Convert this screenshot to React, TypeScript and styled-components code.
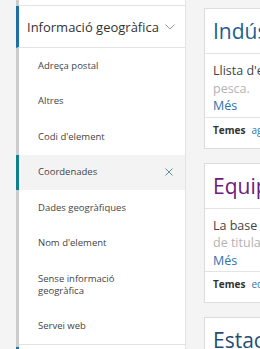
import React from "react";
import styled, { createGlobalStyle } from "styled-components";

const Global = createGlobalStyle`
  html, body { margin: 0; padding: 0; background: #f4f4f4; overflow: hidden; }
  body { font-family: "Open Sans", "Liberation Sans", sans-serif; }
`;

const Page = styled.div`
  display: flex;
  align-items: flex-start;
  width: 260px;
  height: 349px;
  overflow: hidden;
  background: #f4f4f4;
`;

const Sidebar = styled.nav`
  flex: 0 0 auto;
  margin-left: 16px;
  width: 166px;
  border-left: 3px solid #cccccc;
  border-right: 1px solid #e3e3e3;
  background: #ffffff;
`;

const TopStub = styled.div`
  height: 5px;
  border-bottom: 1px solid #e3e3e3;
`;

const SectionHeader = styled.div`
  display: flex;
  align-items: center;
  justify-content: space-between;
  margin-left: -3px;
  border-left: 3px solid #1f6fa6;
  height: 41px;
  padding: 0 8px 0 8px;
  border-bottom: 1px solid #e3e3e3;
  font-size: 13px;
  color: #333;
  white-space: nowrap;
`;

const Chevron = styled.svg`
  width: 10px;
  height: 6px;
  margin-right: 2px;
`;

const List = styled.ul`
  list-style: none;
  margin: 0;
  padding: 0;
  border-bottom: 1px solid #e3e3e3;
`;

const Item = styled.li<{ $active?: boolean }>`
  display: flex;
  align-items: center;
  justify-content: space-between;
  margin-left: -3px;
  border-left: 3px solid ${(p) => (p.$active ? "#127f8c" : "transparent")};
  background: ${(p) => (p.$active ? "#f3f3f3" : "transparent")};
  padding: 11.75px 12px 11.75px 19px;
  font-size: 9.5px;
  line-height: 12px;
  color: #444;
`;

const ItemText = styled.span`
  max-width: 110px;
`;

const Close = styled.svg`
  width: 8px;
  height: 8px;
  flex: 0 0 auto;
`;

const NextHeader = styled.div`
  margin-left: -3px;
  margin-top: 2px;
  border-left: 3px solid #1f6fa6;
  height: 20px;
`;

const Cards = styled.div`
  flex: 0 0 auto;
  margin-left: 18px;
  margin-top: 8px;
  display: flex;
  flex-direction: column;
  gap: 14px;
`;

const Card = styled.article`
  width: 300px;
  background: #fff;
  border: 1px solid #dcdcdc;
`;

const CardTitle = styled.h2<{ $color: string }>`
  margin: 0;
  height: 44px;
  display: flex;
  align-items: center;
  padding: 0 8px;
  border-bottom: 1px solid #e3e3e3;
  font-size: 21px;
  font-weight: 400;
  color: ${(p) => p.$color};
  white-space: nowrap;
`;

const CardBody = styled.div`
  padding: 8px 8px 2px;
  font-size: 12.5px;
  line-height: 17.5px;
  color: #444;
  white-space: nowrap;
`;

const Line = styled.div<{ $faded?: boolean }>`
  color: ${(p) => (p.$faded ? "#b3b3b3" : "#444")};
`;

const More = styled.a`
  display: block;
  color: #2f73a8;
  text-decoration: none;
`;

const CardFooter = styled.div`
  border-top: 1px solid #e3e3e3;
  padding: 6px 8px 12px;
  font-size: 10px;
  line-height: 12px;
  white-space: nowrap;
`;

const Label = styled.span`
  font-weight: 700;
  color: #333;
  margin-right: 6px;
`;

const Tag = styled.a`
  color: #2f73a8;
  text-decoration: none;
`;

const items = [
  "Adreça postal",
  "Altres",
  "Codi d'element",
  "Coordenades",
  "Dades geogràfiques",
  "Nom d'element",
  "Sense informació geogràfica",
  "Servei web",
];

export default function App() {
  return (
    <>
      <Global />
      <Page>
        <Sidebar>
          <TopStub />
          <SectionHeader>
            <span>Informació geogràfica</span>
            <Chevron viewBox="0 0 10 6">
              <path d="M0.5 0.5 L5 5 L9.5 0.5" fill="none" stroke="#9a9a9a" strokeWidth="1" />
            </Chevron>
          </SectionHeader>
          <List>
            {items.map((t) => (
              <Item key={t} $active={t === "Coordenades"}>
                <ItemText>{t}</ItemText>
                {t === "Coordenades" && (
                  <Close viewBox="0 0 8 8">
                    <path d="M0.5 0.5 L7.5 7.5 M7.5 0.5 L0.5 7.5" stroke="#5f8f9c" strokeWidth="1" />
                  </Close>
                )}
              </Item>
            ))}
          </List>
          <NextHeader />
        </Sidebar>
        <Cards>
          <Card>
            <CardTitle $color="#1f5f8f">Indústries agroalimentàries</CardTitle>
            <CardBody>
              <Line>Llista d'empreses de la indústria agroalimentària i de la</Line>
              <Line $faded>pesca.</Line>
              <More href="#">Més</More>
            </CardBody>
            <CardFooter>
              <Label>Temes</Label>
              <Tag href="#">agricultura</Tag>
            </CardFooter>
          </Card>
          <Card>
            <CardTitle $color="#6f1a7e">Equipaments culturals</CardTitle>
            <CardBody>
              <Line>La base de dades d'equipaments culturals</Line>
              <Line $faded>de titularitat pública i privada.</Line>
              <More href="#">Més</More>
            </CardBody>
            <CardFooter>
              <Label>Temes</Label>
              <Tag href="#">equipaments</Tag>
            </CardFooter>
          </Card>
          <Card>
            <CardTitle $color="#1f4f78">Estacions meteorològiques</CardTitle>
          </Card>
        </Cards>
      </Page>
    </>
  );
}
